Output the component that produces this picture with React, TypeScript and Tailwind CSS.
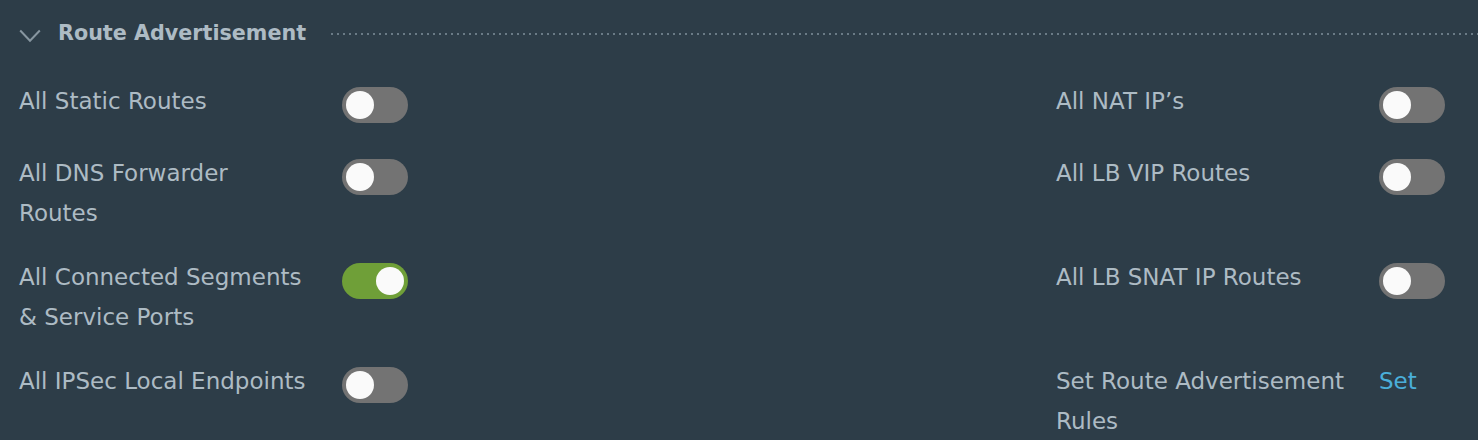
import React from "react";

function Toggle({ on }: { on?: boolean }) {
  return (
    <div
      className={
        "relative mt-[6px] h-[36px] w-[66px] shrink-0 rounded-full " +
        (on ? "bg-[#6f9f38]" : "bg-[#737373]")
      }
    >
      <div
        className={
          "absolute top-[4px] h-[28px] w-[28px] rounded-full bg-[#fafafa] " +
          (on ? "left-[34px]" : "left-[4px]")
        }
      />
    </div>
  );
}

function Row({
  lines,
  on,
  link,
}: {
  lines: string[];
  on?: boolean;
  link?: boolean;
}) {
  return (
    <div className="flex min-h-[48px] w-[389px] items-start">
      <div className="w-[323px] shrink-0 whitespace-nowrap text-[23px] leading-[40px] text-[#adbbc4]">
        {lines.map((l, i) => (
          <div key={i}>{l}</div>
        ))}
      </div>
      {link ? (
        <span className="text-[23px] leading-[40px] text-[#4aaed9]">Set</span>
      ) : (
        <Toggle on={on} />
      )}
    </div>
  );
}

export default function App() {
  return (
    <div
      className="h-[440px] w-full overflow-hidden bg-[#2d3d48] pl-[19px] pr-[33px] pt-[14px]"
      style={{ fontFamily: '"DejaVu Sans", "Open Sans", sans-serif' }}
    >
      <div className="mr-[-33px] flex h-[40px] items-center">
        <svg
          width="22"
          height="14"
          viewBox="0 0 22 14"
          className="mt-[3px] shrink-0"
        >
          <path
            d="M1.2 1.5 L11 11.8 L20.8 1.5"
            fill="none"
            stroke="#8796a0"
            strokeWidth="2"
          />
        </svg>
        <span className="ml-[17px] whitespace-nowrap text-[20.7px] font-bold text-[#adbbc4]">
          Route Advertisement
        </span>
        <div className="ml-[25px] h-[2px] flex-1 bg-[linear-gradient(to_right,#6a7b86_2px,transparent_2px)] bg-[length:6px_2px] bg-repeat-x" />
      </div>
      <div className="mt-[27px] grid grid-cols-[389px_389px] justify-between gap-y-[24px]">
        <Row lines={["All Static Routes"]} />
        <Row lines={["All NAT IP\u2019s"]} />
        <Row lines={["All DNS Forwarder", "Routes"]} />
        <Row lines={["All LB VIP Routes"]} />
        <Row lines={["All Connected Segments", "& Service Ports"]} on />
        <Row lines={["All LB SNAT IP Routes"]} />
        <Row lines={["All IPSec Local Endpoints"]} />
        <Row lines={["Set Route Advertisement", "Rules"]} link />
      </div>
    </div>
  );
}
